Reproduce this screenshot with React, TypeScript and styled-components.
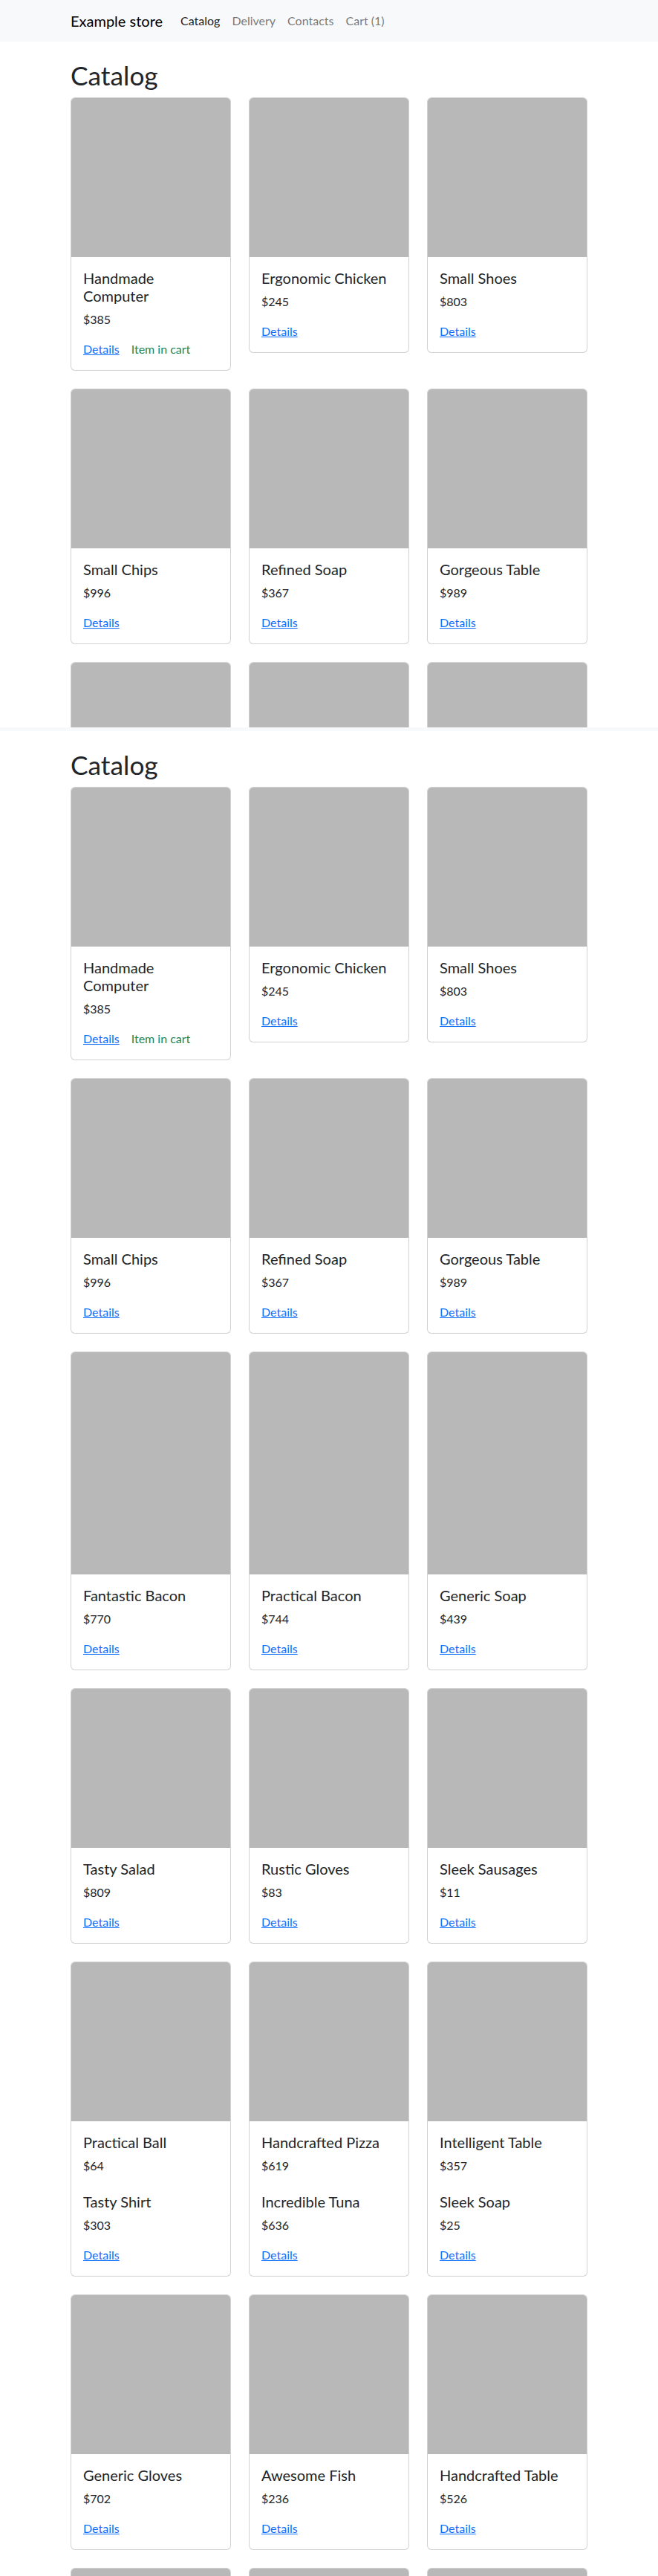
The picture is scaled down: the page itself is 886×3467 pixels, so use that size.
import React from "react";
import styled, { createGlobalStyle } from "styled-components";

const GlobalStyle = createGlobalStyle`
  html, body {
    margin: 0;
    padding: 0;
    overflow: hidden;
    background: #fff;
  }
  body {
    font-family: Lato, "Open Sans", "Liberation Sans", sans-serif;
    font-size: 16px;
    line-height: 1.5;
    color: #212529;
  }
  * { box-sizing: border-box; }
`;

type Product = { name: string; price: number };
type Item = { products: Product[]; ratio?: number; inCart?: boolean };

const items: Item[] = [
  { products: [{ name: "Handmade Computer", price: 385 }], inCart: true },
  { products: [{ name: "Ergonomic Chicken", price: 245 }] },
  { products: [{ name: "Small Shoes", price: 803 }] },
  { products: [{ name: "Small Chips", price: 996 }] },
  { products: [{ name: "Refined Soap", price: 367 }] },
  { products: [{ name: "Gorgeous Table", price: 989 }] },
  { products: [{ name: "Fantastic Bacon", price: 770 }], ratio: 1.397 },
  { products: [{ name: "Practical Bacon", price: 744 }], ratio: 1.397 },
  { products: [{ name: "Generic Soap", price: 439 }], ratio: 1.397 },
  { products: [{ name: "Tasty Salad", price: 809 }] },
  { products: [{ name: "Rustic Gloves", price: 83 }] },
  { products: [{ name: "Sleek Sausages", price: 11 }] },
  {
    products: [
      { name: "Practical Ball", price: 64 },
      { name: "Tasty Shirt", price: 303 },
    ],
  },
  {
    products: [
      { name: "Handcrafted Pizza", price: 619 },
      { name: "Incredible Tuna", price: 636 },
    ],
  },
  {
    products: [
      { name: "Intelligent Table", price: 357 },
      { name: "Sleek Soap", price: 25 },
    ],
  },
  { products: [{ name: "Generic Gloves", price: 702 }] },
  { products: [{ name: "Awesome Fish", price: 236 }] },
  { products: [{ name: "Handcrafted Table", price: 526 }] },
  { products: [{ name: "Rustic Chair", price: 412 }] },
  { products: [{ name: "Licensed Keyboard", price: 158 }] },
  { products: [{ name: "Unbranded Hat", price: 97 }] },
];

const Page = styled.div`
  height: 3467px;
  overflow: hidden;
`;

const Viewport = styled.div`
  height: 979px;
  overflow: hidden;
`;

const Strip = styled.div`
  height: 5px;
  background: #f8f9fa;
`;

const Navbar = styled.nav`
  background: #f8f9fa;
  padding: 8px 0;
`;

const Container = styled.div`
  width: 720px;
  margin: 0 auto;
  padding: 0 12px;
`;

const NavInner = styled(Container)`
  display: flex;
  align-items: center;
`;

const Brand = styled.a`
  font-size: 20px;
  line-height: 30px;
  padding: 5px 0;
  margin-right: 16px;
  color: #000;
  text-decoration: none;
`;

const NavList = styled.div`
  display: flex;
`;

const NavLink = styled.a<{ $active?: boolean }>`
  padding: 8px;
  font-size: 16px;
  line-height: 24px;
  text-decoration: none;
  color: ${(p) => (p.$active ? "rgba(0,0,0,0.9)" : "rgba(0,0,0,0.55)")};
`;

const Main = styled(Container)`
  padding-top: 25px;
`;

const Title = styled.h1`
  margin: 0 0 8px;
  font-size: 35.29px;
  line-height: 1.2;
  font-weight: 400;
`;

const Grid = styled.div`
  display: grid;
  grid-template-columns: repeat(3, 1fr);
  gap: 24px;
  align-items: start;
`;

const Card = styled.div`
  border: 1px solid rgba(0, 0, 0, 0.175);
  border-radius: 6px;
  background: #fff;
  overflow: hidden;
`;

const CardImage = styled.div<{ $ratio: number }>`
  width: 100%;
  aspect-ratio: 1 / ${(p) => p.$ratio};
  background: #b8b8b8;
`;

const CardBody = styled.div`
  padding: 16px;
`;

const ProductBlock = styled.div`
  & + & {
    padding-top: 8px;
  }
`;

const ProductName = styled.h5`
  margin: 0 0 8px;
  font-size: 20px;
  line-height: 24px;
  font-weight: 400;
  color: #212529;
`;

const Price = styled.p`
  margin: 0 0 16px;
  font-size: 16px;
  line-height: 24px;
`;

const Actions = styled.div`
  display: flex;
  align-items: center;
  gap: 16px;
  line-height: 24px;
`;

const DetailsLink = styled.a`
  color: #0d6efd;
  text-decoration: underline;
`;

const InCart = styled.span`
  color: #198754;
`;

function ProductCard({ item }: { item: Item }) {
  return (
    <Card>
      <CardImage $ratio={item.ratio ?? 1} />
      <CardBody>
        {item.products.map((p) => (
          <ProductBlock key={p.name}>
            <ProductName>{p.name}</ProductName>
            <Price>${p.price}</Price>
          </ProductBlock>
        ))}
        <Actions>
          <DetailsLink href="#">Details</DetailsLink>
          {item.inCart && <InCart>Item in cart</InCart>}
        </Actions>
      </CardBody>
    </Card>
  );
}

function Catalog() {
  return (
    <Main>
      <Title>Catalog</Title>
      <Grid>
        {items.map((item, i) => (
          <ProductCard key={i} item={item} />
        ))}
      </Grid>
    </Main>
  );
}

export default function App() {
  return (
    <Page>
      <GlobalStyle />
      <Viewport>
        <Navbar>
          <NavInner>
            <Brand href="#">Example store</Brand>
            <NavList>
              <NavLink $active href="#">Catalog</NavLink>
              <NavLink href="#">Delivery</NavLink>
              <NavLink href="#">Contacts</NavLink>
              <NavLink href="#">Cart (1)</NavLink>
            </NavList>
          </NavInner>
        </Navbar>
        <Catalog />
      </Viewport>
      <Strip />
      <Catalog />
    </Page>
  );
}
